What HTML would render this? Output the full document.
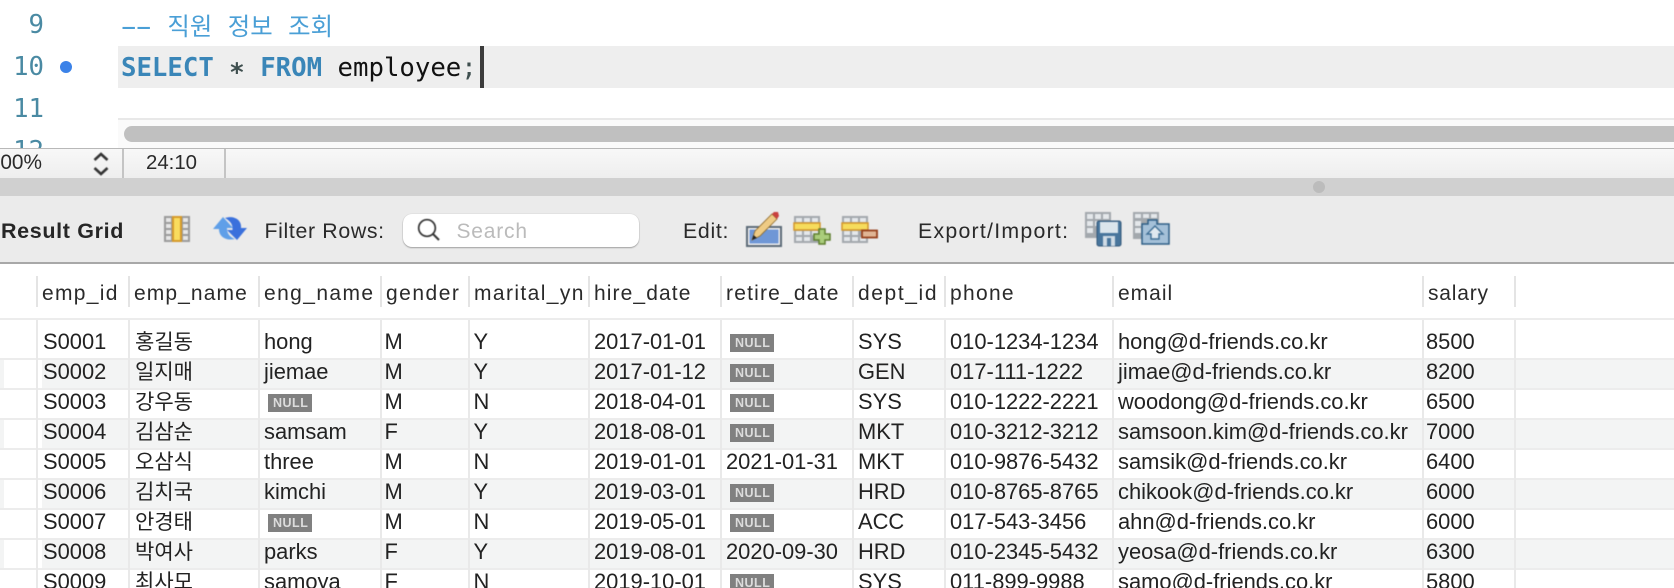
<!DOCTYPE html>
<html><head><meta charset="utf-8">
<style>
html,body{margin:0;padding:0;width:1674px;height:588px;overflow:hidden;background:#fff}
.a{position:absolute}
svg.a{filter:blur(.4px)}
#root{position:relative;width:1674px;height:588px;overflow:hidden;font-family:"Liberation Sans","Noto Sans CJK KR",sans-serif;color:#222}
.mono{font-family:"DejaVu Sans Mono","Noto Sans CJK KR",monospace;font-size:25.7px;line-height:42px;white-space:pre}
.ln{color:#4a8aa3;text-align:right;left:0;width:44px;font-size:25.7px}
.dash{display:inline-block;transform:scaleX(1.9)}
.h{position:absolute;top:279px;font-size:21px;line-height:30px;color:#2a2a2a;white-space:nowrap}
.v{position:absolute;top:320px;width:2px;height:268px;background:#e9e9e9}
.hs{position:absolute;top:276px;width:2px;height:31px;background:#e4e4e4}
.bg{position:absolute;left:42px;width:1632px;height:28px;background:#f3f4f4}
.bgl{position:absolute;left:0;width:4px;height:28px;background:#f3f4f4}
.l{position:absolute;left:0;width:1674px;height:2px;background:#ececec}
.r{position:absolute;left:0;width:1674px;height:30px;line-height:30px;font-size:21.9px;color:#222;white-space:nowrap}
.r span{position:absolute;top:0}
.c1{left:42px}.c2{left:134px}.c3{left:264px}.c4{left:386px}.c5{left:474px}.c6{left:594px}.c7{left:726px}.c8{left:858px}.c9{left:950px}.c10{left:1118px}.c11{left:1428px}
.r span.c1{left:43px}
.r span.c2{font-size:21px;top:1px;left:135px}
.r span.c4{left:384.500px}
.r span.c5{left:473.500px}
.r span.c11{left:1426px}
.n{position:absolute;top:7px!important;width:44px;height:18px;background:#808080;color:#dcdcdc;font-size:12.500px;font-weight:bold;line-height:18px;text-indent:5px;letter-spacing:.5px}
.n3{left:268px}.n7{left:730px}
.t{position:absolute;font-size:21.300px;line-height:30px;color:#2a2a2a;white-space:nowrap}
</style></head>
<body><div id="root">

<!-- editor -->
<div class="a" style="left:118px;top:46px;width:1556px;height:42px;background:#eeeeee"></div>
<div class="a mono ln" style="top:4px">9</div>
<div class="a mono ln" style="top:46px">10</div>
<div class="a mono ln" style="top:88px">11</div>
<div class="a mono ln" style="top:130px">12</div>
<div class="a" style="left:60px;top:61px;width:12px;height:12px;border-radius:50%;background:#3b82e8"></div>
<div class="a mono" style="left:121px;top:6px;color:#4a9fd6"><span class="dash">-</span><span class="dash">-</span> <span style="font-size:24.400px">직원</span> <span style="font-size:24.400px">정보</span> <span style="font-size:24.400px">조회</span></div>
<div class="a mono" style="left:121px;top:46.500px;color:#111"><b style="color:#3a86b8">SELECT</b> <b style="color:#3f4f4f">∗</b> <b style="color:#3a86b8">FROM</b> employee<span style="color:#3f4f4f">;</span></div>
<div class="a" style="left:480px;top:46px;width:4px;height:42px;background:#3c3c3c"></div>
<div class="a" style="left:118px;top:118px;width:1556px;height:2px;background:#e8e8e8"></div>
<div class="a" style="left:118px;top:120px;width:1556px;height:28px;background:#fafafa"></div>
<div class="a" style="left:124px;top:126px;width:1570px;height:16px;border-radius:8px;background:#c0c0c0"></div>

<!-- status bar -->
<div class="a" style="left:0;top:148px;width:1674px;height:30px;background:linear-gradient(#f8f8f8,#eeeeee)"></div>
<div class="a" style="left:0;top:147.500px;width:1674px;height:1.500px;background:#b8b8b8"></div>
<div class="t" style="right:1632px;top:148px;font-size:20.800px">100%</div>
<svg class="a" style="left:92px;top:151px" width="18" height="26" viewBox="0 0 18 26"><path d="M2.500 9 9 3l6.500 6M2.500 17 9 23l6.500-6" fill="none" stroke="#333" stroke-width="2.600"/></svg>
<div class="a" style="left:122px;top:149px;width:2px;height:29px;background:#c4c4c4"></div>
<div class="t" style="left:146px;top:148px;font-size:20.400px">24:10</div>
<div class="a" style="left:224px;top:149px;width:2px;height:29px;background:#c4c4c4"></div>

<!-- splitter -->
<div class="a" style="left:0;top:178px;width:1674px;height:18px;background:#d0d0d0"></div>
<div class="a" style="left:1313px;top:181px;width:12px;height:12px;border-radius:50%;background:#bcbcbc"></div>

<!-- toolbar -->
<div class="a" style="left:0;top:196px;width:1674px;height:66px;background:#ebebeb"></div>
<div class="a" style="left:0;top:262px;width:1674px;height:2px;background:#a8a8a8"></div>
<div class="t" style="left:1px;top:216px;font-weight:bold;color:#262626;font-size:21.500px;letter-spacing:.65px">Result Grid</div>

<svg class="a" style="left:160px;top:212px" width="36" height="34" viewBox="0 0 36 34">
<rect x="4" y="4" width="26" height="26" fill="#9b9b9b"/>
<g fill="#e6e6e6"><rect x="6" y="6" width="5" height="4"/><rect x="6" y="12" width="5" height="4"/><rect x="6" y="18" width="5" height="4"/><rect x="6" y="24" width="5" height="4"/><rect x="23" y="6" width="5" height="4"/><rect x="23" y="12" width="5" height="4"/><rect x="23" y="18" width="5" height="4"/><rect x="23" y="24" width="5" height="4"/></g>
<rect x="12" y="4" width="10" height="26" fill="#d59a2c"/><rect x="14" y="6" width="6" height="22" fill="#f9dc5e"/>
</svg>

<svg class="a" style="left:211px;top:214px" width="38" height="30" viewBox="0 0 38 30">
<path d="M2 15 12 3 22 14H16C16 20 19 23 24 25 15 27 8 23 8 15Z" fill="#5f9fe8"/>
<path d="M36 14 26 26 16 16H21.500C22 10 19 7 14 4 23 1 31 6 30 14Z" fill="#3a70dc"/>
</svg>

<div class="t" style="left:264.500px;top:216px;letter-spacing:.65px">Filter Rows:</div>
<div class="a" style="left:403px;top:214px;width:236px;height:33px;background:#fff;border-radius:9px;box-shadow:0 1px 1.500px rgba(0,0,0,.3),0 0 1px rgba(0,0,0,.2)"></div>
<svg class="a" style="left:416px;top:217px" width="26" height="26" viewBox="0 0 26 26"><circle cx="11" cy="11" r="8.300" fill="none" stroke="#333" stroke-width="1.700"/><path d="M17 17 23 23" stroke="#333" stroke-width="2" fill="none"/></svg>
<div class="t" style="left:456.500px;top:217px;color:#bbbbbb;font-size:21px;letter-spacing:.8px">Search</div>

<div class="t" style="left:683px;top:216px;letter-spacing:.7px">Edit:</div>
<svg class="a" style="left:745px;top:211px" width="38" height="36" viewBox="0 0 38 36">
<rect x="2" y="16" width="34" height="19" fill="#f0f0f0" stroke="#5d6b78" stroke-width="2"/>
<rect x="4.500" y="18.500" width="29" height="14" fill="#6f97d6"/>
<path d="M7 29 10 20 27 3 32 8 15 25Z" fill="#eecb85" stroke="#8f6a2a" stroke-width=".8"/>
<path d="M27 3 29 1 33 1 34 5 32 8Z" fill="#c9413f"/>
<path d="M7 29 8.500 24 12 27Z" fill="#222"/>
</svg>
<svg class="a" style="left:793px;top:215px" width="38" height="30" viewBox="0 0 38 30">
<rect x="1" y="1" width="26" height="27" fill="#a3a8ad"/>
<g fill="#e4e7ea"><rect x="3" y="3" width="6" height="4"/><rect x="11" y="3" width="6" height="4"/><rect x="19" y="3" width="6" height="4"/><rect x="3" y="16" width="6" height="4"/><rect x="11" y="16" width="6" height="4"/><rect x="19" y="16" width="6" height="4"/><rect x="3" y="22" width="6" height="4"/><rect x="11" y="22" width="6" height="4"/></g>
<rect x="1" y="8" width="26" height="7" fill="#f6dc5c" stroke="#d3962c" stroke-width="1.500"/>
<path d="M26 14h6v5h5v6h-5v4h-6v-4h-5v-6h5z" fill="#aacd7b" stroke="#5f7f2f" stroke-width="1.500"/>
</svg>
<svg class="a" style="left:841px;top:215px" width="38" height="30" viewBox="0 0 38 30">
<rect x="1" y="1" width="26" height="27" fill="#a3a8ad"/>
<g fill="#e4e7ea"><rect x="3" y="3" width="6" height="4"/><rect x="11" y="3" width="6" height="4"/><rect x="19" y="3" width="6" height="4"/><rect x="3" y="16" width="6" height="4"/><rect x="11" y="16" width="6" height="4"/><rect x="3" y="22" width="6" height="4"/><rect x="11" y="22" width="6" height="4"/><rect x="19" y="22" width="6" height="4"/></g>
<rect x="1" y="8" width="26" height="7" fill="#f6dc5c" stroke="#d3962c" stroke-width="1.500"/>
<rect x="21" y="15.500" width="15" height="7" fill="#e0b595" stroke="#96401c" stroke-width="1.800"/>
</svg>

<div class="t" style="left:918px;top:216px;letter-spacing:1.250px">Export/Import:</div>
<svg class="a" style="left:1084px;top:211px" width="38" height="36" viewBox="0 0 38 36">
<rect x="1" y="1" width="26" height="26" fill="#a3a8ad"/>
<g fill="#e4e7ea"><rect x="3" y="3" width="6" height="5"/><rect x="11" y="3" width="6" height="5"/><rect x="19" y="3" width="6" height="5"/><rect x="3" y="10" width="6" height="5"/><rect x="11" y="10" width="6" height="5"/><rect x="3" y="17" width="6" height="5"/></g>
<rect x="13" y="10" width="24" height="25" rx="2" fill="#48759c" stroke="#36597a" stroke-width="1"/>
<rect x="16" y="11" width="18" height="11" fill="#dbe5ec"/>
<rect x="19" y="25" width="12" height="10" fill="#cfdbe5"/><rect x="23" y="27" width="4" height="8" fill="#48759c"/>
</svg>
<svg class="a" style="left:1132px;top:211px" width="38" height="36" viewBox="0 0 38 36">
<rect x="1" y="1" width="26" height="27" fill="#a3a8ad"/>
<g fill="#e4e7ea"><rect x="3" y="3" width="6" height="4"/><rect x="11" y="3" width="6" height="4"/><rect x="19" y="3" width="6" height="4"/><rect x="3" y="10" width="6" height="5"/><rect x="3" y="17" width="6" height="5"/></g>
<path d="M10 33V13H16V9H25V13H37V33Z" fill="#a4c0d8" stroke="#2f5f86" stroke-width="1.500"/>
<path d="M23 15 31 23H27V28H19V23H15Z" fill="#dfe8ef" stroke="#3f6f96" stroke-width="1.400"/>
</svg>

<!-- header -->
<div class="hs" style="left:36px"></div><div class="hs" style="left:128px"></div><div class="hs" style="left:258px"></div><div class="hs" style="left:380px"></div><div class="hs" style="left:468px"></div><div class="hs" style="left:588px"></div><div class="hs" style="left:720px"></div><div class="hs" style="left:852px"></div><div class="hs" style="left:944px"></div><div class="hs" style="left:1112px"></div><div class="hs" style="left:1422px"></div><div class="hs" style="left:1514px"></div>
<div class="h c1" style="letter-spacing:1.300px">emp_id</div><div class="h c2" style="letter-spacing:1.100px">emp_name</div><div class="h c3" style="letter-spacing:1.400px">eng_name</div><div class="h c4" style="letter-spacing:1.500px">gender</div><div class="h c5" style="letter-spacing:1.400px">marital_yn</div><div class="h c6" style="letter-spacing:1.100px">hire_date</div><div class="h c7" style="letter-spacing:1.200px">retire_date</div><div class="h c8" style="letter-spacing:1.600px">dept_id</div><div class="h c9" style="letter-spacing:1.300px">phone</div><div class="h c10" style="letter-spacing:1px">email</div><div class="h c11" style="letter-spacing:.8px">salary</div>

<!-- grid backgrounds -->
<div class="bg" style="top:360px"></div><div class="bg" style="top:420px"></div><div class="bg" style="top:480px"></div><div class="bg" style="top:540px"></div>
<div class="bgl" style="top:360px"></div><div class="bgl" style="top:420px"></div><div class="bgl" style="top:480px"></div><div class="bgl" style="top:540px"></div>
<div class="l" style="top:318px"></div><div class="l" style="top:358px"></div><div class="l" style="top:388px"></div><div class="l" style="top:418px"></div><div class="l" style="top:448px"></div><div class="l" style="top:478px"></div><div class="l" style="top:508px"></div><div class="l" style="top:538px"></div><div class="l" style="top:568px"></div>
<div class="v" style="left:36px"></div><div class="v" style="left:128px"></div><div class="v" style="left:258px"></div><div class="v" style="left:380px"></div><div class="v" style="left:468px"></div><div class="v" style="left:588px"></div><div class="v" style="left:720px"></div><div class="v" style="left:852px"></div><div class="v" style="left:944px"></div><div class="v" style="left:1112px"></div><div class="v" style="left:1422px"></div><div class="v" style="left:1514px"></div>

<!-- rows -->
<div class="r" style="top:327px"><span class="c1">S0001</span><span class="c2">홍길동</span><span class="c3">hong</span><span class="c4">M</span><span class="c5">Y</span><span class="c6">2017-01-01</span><span class="n n7">NULL</span><span class="c8">SYS</span><span class="c9">010-1234-1234</span><span class="c10">hong@d-friends.co.kr</span><span class="c11">8500</span></div>
<div class="r" style="top:357px"><span class="c1">S0002</span><span class="c2">일지매</span><span class="c3">jiemae</span><span class="c4">M</span><span class="c5">Y</span><span class="c6">2017-01-12</span><span class="n n7">NULL</span><span class="c8">GEN</span><span class="c9">017-111-1222</span><span class="c10">jimae@d-friends.co.kr</span><span class="c11">8200</span></div>
<div class="r" style="top:387px"><span class="c1">S0003</span><span class="c2">강우동</span><span class="n n3">NULL</span><span class="c4">M</span><span class="c5">N</span><span class="c6">2018-04-01</span><span class="n n7">NULL</span><span class="c8">SYS</span><span class="c9">010-1222-2221</span><span class="c10">woodong@d-friends.co.kr</span><span class="c11">6500</span></div>
<div class="r" style="top:417px"><span class="c1">S0004</span><span class="c2">김삼순</span><span class="c3">samsam</span><span class="c4">F</span><span class="c5">Y</span><span class="c6">2018-08-01</span><span class="n n7">NULL</span><span class="c8">MKT</span><span class="c9">010-3212-3212</span><span class="c10">samsoon.kim@d-friends.co.kr</span><span class="c11">7000</span></div>
<div class="r" style="top:447px"><span class="c1">S0005</span><span class="c2">오삼식</span><span class="c3">three</span><span class="c4">M</span><span class="c5">N</span><span class="c6">2019-01-01</span><span class="c7">2021-01-31</span><span class="c8">MKT</span><span class="c9">010-9876-5432</span><span class="c10">samsik@d-friends.co.kr</span><span class="c11">6400</span></div>
<div class="r" style="top:477px"><span class="c1">S0006</span><span class="c2">김치국</span><span class="c3">kimchi</span><span class="c4">M</span><span class="c5">Y</span><span class="c6">2019-03-01</span><span class="n n7">NULL</span><span class="c8">HRD</span><span class="c9">010-8765-8765</span><span class="c10">chikook@d-friends.co.kr</span><span class="c11">6000</span></div>
<div class="r" style="top:507px"><span class="c1">S0007</span><span class="c2">안경태</span><span class="n n3">NULL</span><span class="c4">M</span><span class="c5">N</span><span class="c6">2019-05-01</span><span class="n n7">NULL</span><span class="c8">ACC</span><span class="c9">017-543-3456</span><span class="c10">ahn@d-friends.co.kr</span><span class="c11">6000</span></div>
<div class="r" style="top:537px"><span class="c1">S0008</span><span class="c2">박여사</span><span class="c3">parks</span><span class="c4">F</span><span class="c5">Y</span><span class="c6">2019-08-01</span><span class="c7">2020-09-30</span><span class="c8">HRD</span><span class="c9">010-2345-5432</span><span class="c10">yeosa@d-friends.co.kr</span><span class="c11">6300</span></div>
<div class="r" style="top:567px"><span class="c1">S0009</span><span class="c2">최사모</span><span class="c3">samoya</span><span class="c4">F</span><span class="c5">N</span><span class="c6">2019-10-01</span><span class="n n7">NULL</span><span class="c8">SYS</span><span class="c9">011-899-9988</span><span class="c10">samo@d-friends.co.kr</span><span class="c11">5800</span></div>

</div></body></html>
